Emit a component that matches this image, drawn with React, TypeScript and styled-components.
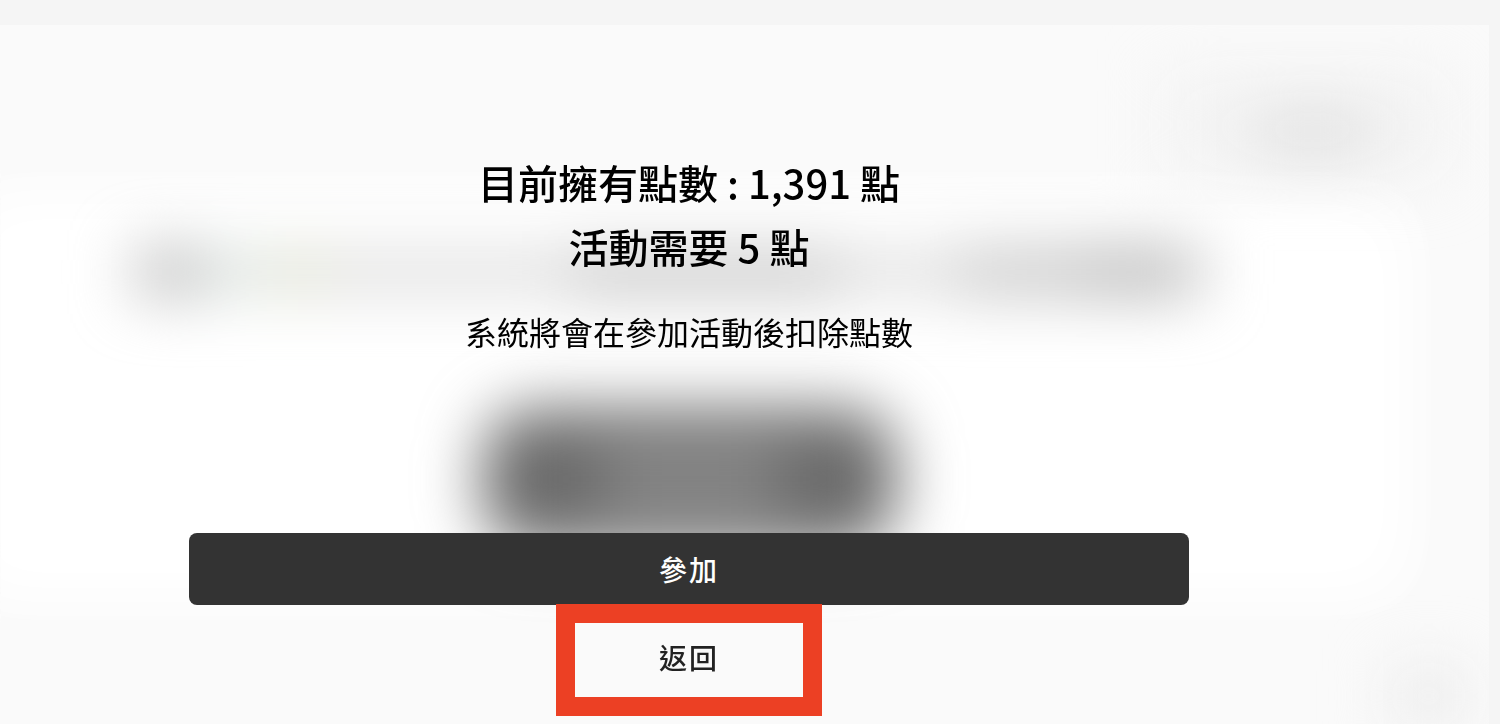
import React from "react";
import styled, { createGlobalStyle } from "styled-components";

const GlobalStyle = createGlobalStyle`
  * {
    box-sizing: border-box;
  }
  body {
    margin: 0;
    background: #f5f5f5;
    font-family: "Noto Sans CJK TC", "Noto Sans", sans-serif;
  }
`;

const Page = styled.div`
  min-height: 100vh;
  display: flex;
  flex-direction: column;
  padding: 25px 11px 0 0;
  overflow: hidden;
`;

const Panel = styled.section`
  position: relative;
  flex: 1;
  display: flex;
  flex-direction: column;
  align-items: center;
  padding: 125px 111px 31px 0;
  background: #fafafa;
  overflow: hidden;
`;

const Backdrop = styled.svg`
  position: absolute;
  top: 0;
  left: 50%;
  width: 1489px;
  height: 699px;
  transform: translateX(-50%);
`;

const Message = styled.div`
  position: relative;
  text-align: center;
  color: #000;
`;

const Title = styled.h1`
  margin: 0;
  font-size: 40px;
  line-height: 64px;
  font-weight: 500;
`;

const Note = styled.p`
  margin: 25px 0 0;
  font-size: 32px;
  line-height: 56px;
  font-weight: 400;
`;

const Actions = styled.div`
  position: relative;
  display: flex;
  flex-direction: column;
  align-items: center;
  gap: 16px;
  width: 100%;
  max-width: 1000px;
  margin-top: 174px;
`;

const Button = styled.button<{ $primary?: boolean }>`
  width: 100%;
  height: 72px;
  padding: 0;
  border: 0;
  border-radius: 8px;
  background: ${(p) => (p.$primary ? "#333" : "transparent")};
  color: ${(p) => (p.$primary ? "#fff" : "#222")};
  font-family: inherit;
  font-size: 28px;
  font-weight: 500;
  letter-spacing: 2px;
  cursor: pointer;
`;

const BackSlot = styled.div`
  position: relative;
  width: 100%;
`;

const Highlight = styled.span`
  position: absolute;
  top: -17px;
  left: 50%;
  width: 266px;
  height: 112px;
  margin-left: -133px;
  border: 19px solid #ec4024;
  background: transparent;
  pointer-events: none;
`;

function BlurredPage() {
  return (
    <Backdrop viewBox="0 25 1489 699" aria-hidden="true">
      <defs>
        <filter id="soft" filterUnits="userSpaceOnUse" x="-200" y="-100" width="1900" height="1000" colorInterpolationFilters="sRGB">
          <feGaussianBlur stdDeviation="31" />
        </filter>
        <filter id="card" filterUnits="userSpaceOnUse" x="-300" y="-100" width="2000" height="1000" colorInterpolationFilters="sRGB">
          <feGaussianBlur stdDeviation="34" />
        </filter>
      </defs>
      <rect x="-30" y="204" width="1428" height="384" fill="#fff" filter="url(#card)" />
      <rect x="-30" y="204" width="1428" height="384" fill="#fff" filter="url(#card)" />
      <g filter="url(#soft)">
        <rect x="1160" y="70" width="290" height="110" fill="#eee" opacity="0.5" />
        <rect x="1254" y="112" width="116" height="44" fill="#dfdfdf" />
        <rect x="134" y="250" width="70" height="44" fill="#b8b8b8" />
        <rect x="204" y="252" width="64" height="40" fill="#dbe3df" />
        <rect x="268" y="252" width="60" height="40" fill="#dddfce" />
        <rect x="328" y="252" width="240" height="40" fill="#dedede" />
        <rect x="568" y="252" width="270" height="42" fill="#c4c4c4" />
        <rect x="838" y="252" width="120" height="40" fill="#dedede" />
        <rect x="958" y="250" width="120" height="44" fill="#c4c4c4" />
        <rect x="1078" y="250" width="122" height="44" fill="#b4b4b4" />
        <rect x="1390" y="668" width="76" height="56" fill="#ebebeb" />
      </g>
      <g filter="url(#soft)">
        <rect x="482" y="409" width="414" height="140" rx="50" fill="#6b6b6b" />
        <rect x="600" y="450" width="180" height="60" fill="#8c8c8c" />
      </g>
    </Backdrop>
  );
}

export default function App() {
  return (
    <>
      <GlobalStyle />
      <Page>
        <Panel>
          <BlurredPage />
          <Message>
            <Title>
              目前擁有點數 : 1,391 點
              <br />
              活動需要 5 點
            </Title>
            <Note>系統將會在參加活動後扣除點數</Note>
          </Message>
          <Actions>
            <Button type="button" $primary>
              參加
            </Button>
            <BackSlot>
              <Button type="button">返回</Button>
              <Highlight />
            </BackSlot>
          </Actions>
        </Panel>
      </Page>
    </>
  );
}
